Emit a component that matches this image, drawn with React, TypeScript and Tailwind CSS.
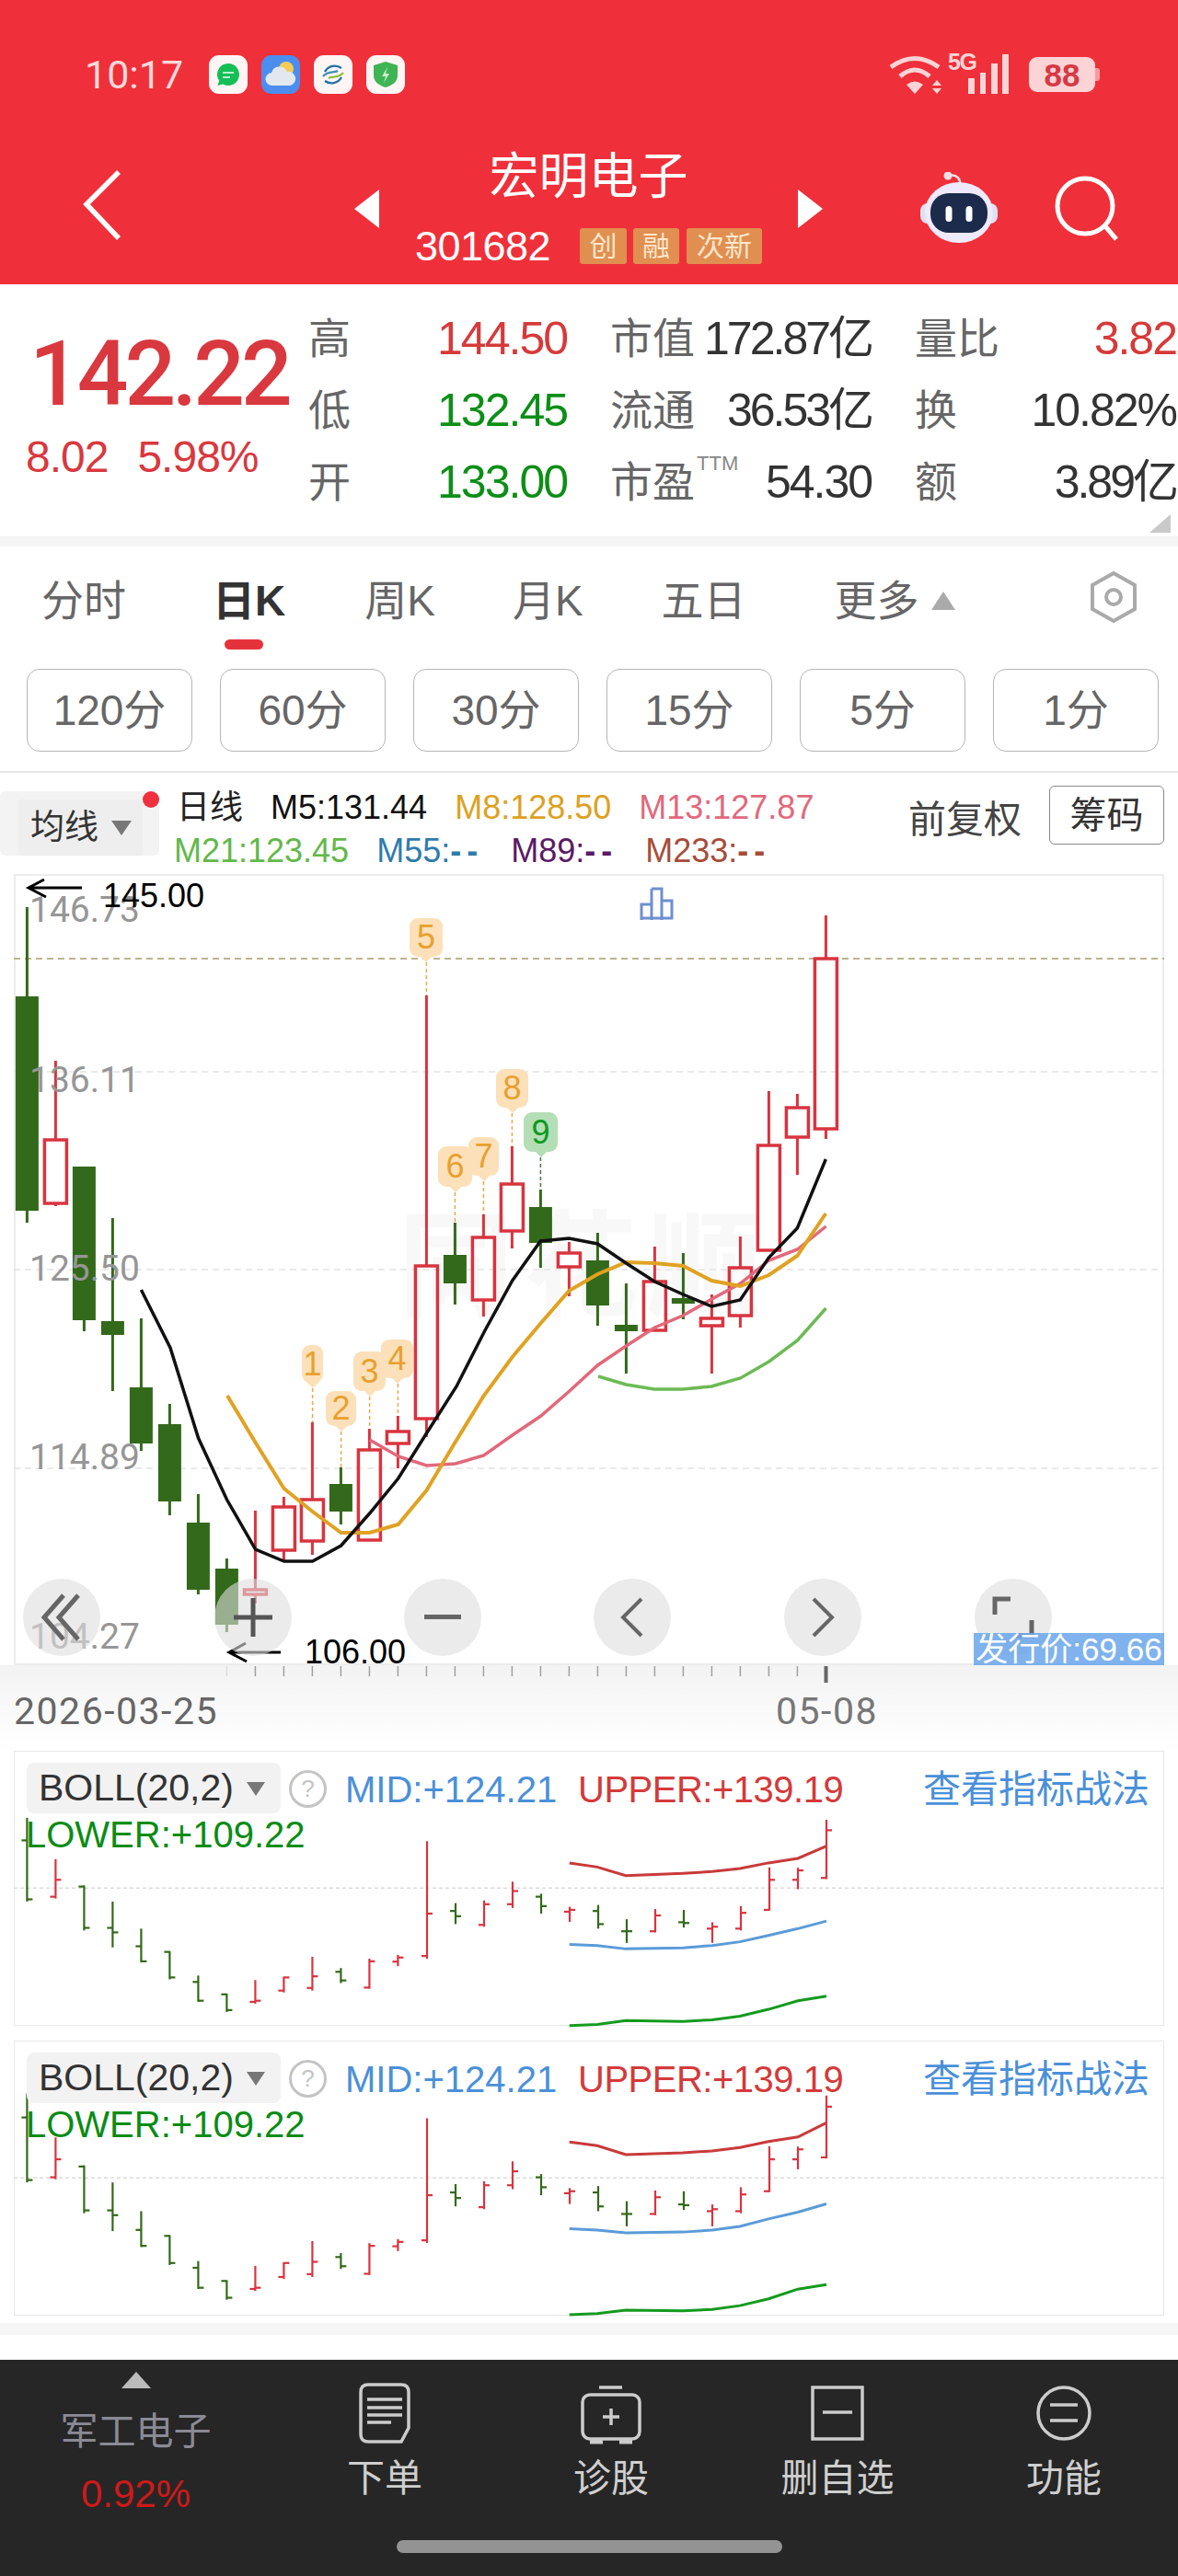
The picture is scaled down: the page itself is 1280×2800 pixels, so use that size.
import React from "react";

const RED = "#d8343f";
const GREEN = "#33691a";
const X = (i: number) => 29.4 + 31 * i;
const pts = (a: number[][]) => a.map((p) => p.join(",")).join(" ");

// [wickTop, bodyTop, bodyBottom, wickBottom, up]
const candles: [number, number, number, number, number][] = [
  [986, 1083, 1316, 1329, 0],
  [1153, 1238, 1309, 1311, 1],
  [1268, 1268, 1435, 1447, 0],
  [1324, 1436, 1451, 1512, 0],
  [1433, 1508, 1569, 1577, 0],
  [1526, 1548, 1632, 1647, 0],
  [1624, 1655, 1728, 1733, 0],
  [1694, 1705, 1766, 1774, 0],
  [1642, 1727, 1734, 1743, 1],
  [1627, 1637, 1686, 1697, 1],
  [1546, 1629, 1676, 1690, 1],
  [1595, 1613, 1643, 1657, 0],
  [1553, 1575, 1675, 1675, 1],
  [1539, 1555, 1570, 1596, 1],
  [1082, 1375, 1543, 1562, 1],
  [1329, 1364, 1395, 1418, 0],
  [1320, 1344, 1414, 1431, 1],
  [1246, 1286, 1339, 1357, 1],
  [1293, 1312, 1351, 1378, 0],
  [1350, 1361, 1378, 1409, 1],
  [1340, 1370, 1419, 1441, 0],
  [1395, 1440, 1447, 1493, 0],
  [1355, 1392, 1447, 1447, 1],
  [1362, 1411, 1417, 1434, 0],
  [1407, 1432, 1442, 1493, 1],
  [1344, 1377, 1431, 1443, 1],
  [1186, 1244, 1360, 1360, 1],
  [1189, 1203, 1237, 1277, 1],
  [995, 1041, 1228, 1238, 1],
];

const m5 = [[153.4, 1402], [185, 1465], [215.5, 1563], [246.5, 1630], [277.6, 1684], [308.6, 1697], [339.6, 1697], [370.6, 1680], [401.6, 1645], [432.7, 1607], [463.4, 1558], [496, 1507], [526.5, 1447], [556.7, 1392], [587.3, 1349], [618.3, 1346], [649.3, 1352], [680.3, 1373], [711.3, 1393], [742.3, 1407], [773.3, 1420], [804.3, 1413], [835.3, 1367], [866.3, 1335], [897.3, 1260]];
const m8 = [[247, 1517], [277.6, 1568], [308.6, 1618], [339.6, 1643], [370.6, 1666], [401.6, 1666], [432.7, 1657], [463.4, 1620], [494.4, 1568], [525.7, 1517], [556.7, 1475], [587.8, 1438], [618.3, 1403], [649.3, 1385], [680.3, 1372], [711.3, 1373], [742.3, 1376], [773.3, 1392], [804.3, 1398], [835.3, 1386], [866.3, 1365], [897.3, 1319]];
const m13 = [[401.6, 1565], [432.7, 1583], [463.6, 1593], [494.7, 1591], [525.7, 1582], [556.7, 1560], [587.8, 1539], [618.8, 1512], [649.4, 1484], [680.3, 1463], [711.3, 1443], [742, 1430], [773.5, 1412], [804.5, 1395], [835.5, 1370], [866.5, 1358], [897.5, 1333]];
const m21 = [[650, 1496], [680.4, 1505], [711, 1510], [742, 1510], [773, 1507], [804.5, 1498], [835.5, 1480], [866.5, 1457], [897.5, 1422]];

// ohlc [top, bottom, leftTick, rightTick, up] in zoom units
const ohlc: [number, number, number, number, number][] = [
  [235, 458, 295, 452, 0], [345, 450, 445, 400, 1], [415, 535, 418, 528, 0], [458, 580, 528, 540, 0],
  [530, 620, 577, 617, 0], [590, 665, 592, 660, 0], [655, 725, 672, 722, 0], [703, 752, 705, 747, 0],
  [667, 730, 725, 722, 1], [658, 700, 695, 660, 1], [605, 695, 688, 657, 1], [635, 675, 645, 668, 0],
  [610, 690, 687, 617, 1], [600, 630, 618, 607, 1], [297, 610, 603, 490, 1], [462, 518, 483, 497, 0],
  [455, 525, 520, 465, 1], [405, 475, 465, 430, 1], [437, 490, 445, 470, 0], [472, 512, 485, 480, 1],
  [467, 530, 483, 518, 0], [505, 568, 537, 537, 0], [478, 540, 537, 495, 1], [480, 527, 513, 515, 0],
  [513, 568, 530, 525, 1], [470, 535, 530, 488, 1], [367, 482, 480, 400, 1], [368, 425, 400, 375, 1],
  [240, 398, 395, 268, 1],
];
const LX = [618.7, 649, 680, 742, 773.8, 804, 835, 867, 898];
const band = (vals: number[]) => pts(vals.map((v, i) => [LX[i], 1880 + v / 2.45]));

const tags = [
  { n: "5", l: 445, t: 998, w: 36, h: 42, cx: 463.4, to: 1082 },
  { n: "1", l: 328, t: 1462, w: 23, h: 41, cx: 339.6, to: 1546 },
  { n: "2", l: 354, t: 1512, w: 33, h: 38, cx: 370.6, to: 1595 },
  { n: "4", l: 414, t: 1456, w: 35, h: 42, cx: 432.4, to: 1539 },
  { n: "3", l: 384, t: 1469, w: 35, h: 43, cx: 401.6, to: 1553 },
  { n: "7", l: 509, t: 1236, w: 33, h: 42, cx: 525.4, to: 1320 },
  { n: "6", l: 476, t: 1246, w: 37, h: 44, cx: 494.4, to: 1329 },
  { n: "8", l: 539, t: 1162, w: 35, h: 42, cx: 556.4, to: 1246 },
  { n: "9", l: 569, t: 1209, w: 37, h: 43, cx: 587.4, to: 1293, green: true },
];

const axis = [
  { v: "146.73", t: 968 },
  { v: "136.11", t: 1153 },
  { v: "125.50", t: 1358 },
  { v: "114.89", t: 1563 },
  { v: "104.27", t: 1758 },
];

function ChartDrawing() {
  return (
    <svg viewBox="15 950 1250 860" width={1250} height={860} className="block overflow-visible relative">
      {[1165, 1380, 1596].map((y) => (
        <line key={y} x1={15} x2={1265} y1={y} y2={y} stroke="#e4e4e4" strokeWidth={1.5} strokeDasharray="7 5" />
      ))}
      <line x1={15} x2={1265} y1={1042} y2={1042} stroke="#bdb48c" strokeWidth={2} strokeDasharray="7 5" />
      {tags.map((t) => (
        <line key={t.n} x1={t.cx} x2={t.cx} y1={t.t + t.h + 6} y2={t.to} stroke={t.green ? "#3f7a3f" : "#e8a94f"} strokeWidth={1.5} strokeDasharray="4 3" />
      ))}
      {candles.map(([wt, bt, bb, wb, up], i) => {
        const x = X(i);
        const c = up ? RED : GREEN;
        return (
          <g key={i}>
            {wt < bt && <line x1={x} x2={x} y1={wt} y2={bt} stroke={c} strokeWidth={3} />}
            {wb > bb && <line x1={x} x2={x} y1={bb} y2={wb} stroke={c} strokeWidth={3} />}
            {up ? (
              <rect x={x - 12} y={bt + 1} width={24} height={bb - bt - 2} fill="none" stroke={c} strokeWidth={3.5} />
            ) : (
              <rect x={x - 12.5} y={bt} width={25} height={bb - bt} fill={c} />
            )}
          </g>
        );
      })}
      <polyline points={pts(m21)} fill="none" stroke="#6cba55" strokeWidth={3.5} />
      <polyline points={pts(m13)} fill="none" stroke="#e2687b" strokeWidth={3.5} />
      <polyline points={pts(m8)} fill="none" stroke="#e0a222" strokeWidth={4} />
      <polyline points={pts(m5)} fill="none" stroke="#111111" strokeWidth={3.5} />
      <path d="M89 965H31M48 956L31 965L50 975" fill="none" stroke="#000" strokeWidth={3} />
      <path d="M305 1796H249M267 1786L249 1796L268 1806" fill="none" stroke="#000" strokeWidth={3} />
      <g fill="none" stroke="#6e8fd0" strokeWidth={3}>
        <path d="M697 1000V983H708V1000M708 966V1000M708 966H719V1000M719 979H730V998H697" />
      </g>
      {candles.slice(7, 28).map((_, i) => (
        <line key={i} x1={X(i + 7)} x2={X(i + 7)} y1={1811} y2={1822} stroke={i === 0 ? "#dddddd" : "#a0a0a0"} strokeWidth={1.5} />
      ))}
      <line x1={897.5} x2={897.5} y1={1811} y2={1829} stroke="#666" strokeWidth={4} />
    </svg>
  );
}

function Tag({ t }: { t: (typeof tags)[number] }) {
  return (
    <div
      className={`absolute flex items-center justify-center rounded-[9px] text-[36px] leading-none ${t.green ? "bg-[#b4deb6] text-[#0e9a1e]" : "bg-[#fce0b9] text-[#e8a02e]"}`}
      style={{ left: t.l - 17, top: t.t - 952, width: t.w, height: t.h }}
    >
      <div className={`absolute left-1/2 -bottom-[4px] -ml-[5px] h-[10px] w-[10px] rotate-45 ${t.green ? "bg-[#b4deb6]" : "bg-[#fce0b9]"}`} />
      <span className="relative">{t.n}</span>
    </div>
  );
}

function RoundBtn({ left, children }: { left: number; children: React.ReactNode }) {
  return (
    <div className="absolute top-[764px] flex h-[84px] w-[84px] items-center justify-center rounded-full bg-[#dddddd]/60" style={{ left }}>
      {children}
    </div>
  );
}

function Panel({ second }: { second?: boolean }) {
  const top = second ? 2218 : 1903;
  const ty = (v: number) => 1880 + (second ? 719.6 + 1.062 * v : v) / 2.45;
  const upper = second ? [1098, 1108, 1132, 1127, 1122, 1113, 1097, 1085, 1047] : [355, 366, 389, 383, 378, 370, 355, 343, 310];
  const mid = second ? [1329, 1333, 1340, 1338, 1333, 1323, 1303, 1285, 1263] : [572, 575, 584, 581, 575, 565, 548, 530, 510];
  const lower = second ? [1558, 1555, 1546, 1548, 1544, 1534, 1516, 1490, 1478] : [788, 785, 775, 777, 773, 763, 745, 722, 710];
  const dotted = 1880 + (second ? 1194 : 422) / 2.45;
  return (
    <div className="relative mx-[15px] h-[299px] w-[1250px] border border-[#e8e8e8]">
      <svg viewBox={`15 ${top} 1250 299`} width={1250} height={299} className="absolute -left-px -top-px overflow-visible">
        <line x1={15} x2={1265} y1={dotted} y2={dotted} stroke="#dcdcdc" strokeWidth={1.5} strokeDasharray="4 3" />
        {ohlc.map(([a, b, l, r, up], i) => {
          const x = X(i) + (i > 13 ? 0.6 : 0);
          const c = up ? RED : GREEN;
          return (
            <g key={i} stroke={c} strokeWidth={2.2}>
              <line x1={x} x2={x} y1={ty(a)} y2={ty(b)} />
              <line x1={x - 6} x2={x} y1={ty(l)} y2={ty(l)} />
              <line x1={x} x2={x + 6} y1={ty(r)} y2={ty(r)} />
            </g>
          );
        })}
        <polyline points={band(upper)} fill="none" stroke="#c93a3a" strokeWidth={3} />
        <polyline points={band(mid)} fill="none" stroke="#5b9bd8" strokeWidth={3} />
        <polyline points={band(lower)} fill="none" stroke="#159a1f" strokeWidth={3} />
      </svg>
      <div className="absolute left-[13px] top-[12px] flex h-[55px] w-[276px] items-center rounded-[8px] bg-[#f2f2f2] pl-[13px] text-[41px] text-[#333]">
        <span>BOLL(20,2)</span>
        <svg width={20} height={18} className="ml-[14px]"><path d="M0 2H20L10 17Z" fill="#777" /></svg>
      </div>
      <div className="absolute left-[298px] top-[20px] flex h-[41px] w-[41px] items-center justify-center rounded-full border-[3px] border-[#c4c4c4] text-[26px] text-[#c4c4c4]">?</div>
      <div className="absolute left-[359px] top-[20px] text-[40px] leading-[42px] text-[#4a90d9]">MID:+124.21</div>
      <div className="absolute left-[612px] top-[20px] text-[40px] leading-[42px] tracking-[-0.5px] text-[#d43a3a]">UPPER:+139.19</div>
      <div className="absolute right-[15px] top-[18px] text-[41px] leading-[46px] text-[#4a90d9]">查看指标战法</div>
      <div className="absolute left-[12px] top-[69px] text-[40px] leading-[42px] text-[#0a8c14]">LOWER:+109.22</div>
    </div>
  );
}

function AppIcons() {
  return (
    <div className="flex items-center gap-[15px]">
      <div className="flex h-[42px] w-[42px] items-center justify-center rounded-[11px] bg-[#fff5f5]">
        <svg width={30} height={30} viewBox="0 0 30 30">
          <path d="M15 3a12 12 0 1 1-6 22.4L3.5 27l1.6-5.2A12 12 0 0 1 15 3Z" fill="#14bf55" />
          <path d="M9 13h12M9 18h8" stroke="#bdf0cf" strokeWidth={2} />
        </svg>
      </div>
      <div className="flex h-[42px] w-[42px] items-center justify-center rounded-[11px] bg-[#4c8df0]">
        <svg width={34} height={34} viewBox="0 0 34 34">
          <circle cx={23} cy={11} r={8} fill="#f5cd55" />
          <path d="M8 29a7 7 0 0 1-1-14 9 9 0 0 1 17-1 7.500 7.500 0 0 1 3 15Z" fill="#e3e8ee" />
        </svg>
      </div>
      <div className="flex h-[42px] w-[42px] items-center justify-center rounded-[11px] bg-[#fff5f5]">
        <svg width={30} height={30} viewBox="0 0 30 30" fill="none" strokeWidth={2.4}>
          <path d="M6 12C10 5 18 4 24 8" stroke="#1f6fa8" />
          <path d="M4 17C10 10 16 14 20 11" stroke="#3d8fb8" />
          <path d="M26 13C20 20 14 16 10 19" stroke="#8fbf3f" />
          <path d="M24 18C20 25 12 26 6 22" stroke="#1f6fa8" />
        </svg>
      </div>
      <div className="flex h-[42px] w-[42px] items-center justify-center rounded-[11px] bg-[#fff5f5]">
        <svg width={30} height={32} viewBox="0 0 30 32">
          <path d="M15 2l13 4v11c0 7-6 11-13 13C8 28 2 24 2 17V6Z" fill="#3fb454" />
          <path d="M17 8l-6 10h4l-2 7 6-10h-4Z" fill="#c9efc9" />
        </svg>
      </div>
    </div>
  );
}

function StatusRight() {
  return (
    <div className="ml-auto flex items-center pr-[85px]">
      <svg width={60} height={44} viewBox="0 0 60 44" fill="none" stroke="#fcd4d6" strokeWidth={5}>
        <path d="M3 14Q29 -5 55 14" />
        <path d="M13 24Q29 10 45 24" />
        <path d="M20 33Q29 26 38 33L29 43Z" fill="#fcd4d6" stroke="none" />
        <path d="M48 34L53 28L58 34ZM48 37L58 37L53 43Z" fill="#fcd4d6" stroke="none" />
      </svg>
      <div className="relative ml-[17px] h-[44px] w-[56px]">
        <span className="absolute -left-[12px] -top-[4px] text-[25px] font-bold leading-[24px] tracking-[-1.5px] text-[#fcd4d6]">5G</span>
        <svg width={46} height={44} viewBox="0 0 46 44" className="absolute right-0 top-0" fill="#fcd4d6">
          <rect x={0} y={26} width={7} height={17} />
          <rect x={13} y={20} width={6} height={23} />
          <rect x={25} y={10} width={7} height={33} />
          <rect x={37} y={0} width={7} height={43} />
        </svg>
      </div>
      <div className="ml-[20px] flex h-[38px] w-[72px] items-center justify-center rounded-[9px] bg-[#fcd4d6] text-[35px] font-bold leading-none text-[#d63a45]">88</div>
      <div className="h-[14px] w-[5px] rounded-r-[3px] bg-[#f79aa0]" />
    </div>
  );
}

function Robot() {
  return (
    <svg width={84} height={80} viewBox="1000 182 84 80" className="ml-[106px]">
      <path d="M1031 186C1040 184 1044 190 1043 196" fill="none" stroke="#f3dfe6" strokeWidth={2.5} />
      <circle cx={1030} cy={186} r={4.500} fill="#f3dfe6" />
      <rect x={1000} y={216} width={84} height={22} rx={8} fill="#dfe0f2" />
      <ellipse cx={1042} cy={226} rx={37} ry={33} fill="#eeeafb" />
      <rect x={1011} y={205} width={62} height={43} rx={20} fill="#1c2a4c" />
      <rect x={1027.500} y={219} width={7} height={17} rx={3.500} fill="#fff" />
      <rect x={1049.500} y={219} width={7} height={17} rx={3.500} fill="#fff" />
    </svg>
  );
}

const rows = [
  [["高", "144.50", "text-[#d63a3a]"], ["市值", "172.87亿", "text-[#333]"], ["量比", "3.82", "text-[#d63a3a]"]],
  [["低", "132.45", "text-[#0d8f17]"], ["流通", "36.53亿", "text-[#333]"], ["换", "10.82%", "text-[#333]"]],
  [["开", "133.00", "text-[#0d8f17]"], ["市盈", "54.30", "text-[#333]"], ["额", "3.89亿", "text-[#333]"]],
];

export default function App() {
  return (
    <div className="relative flex h-[2800px] w-[1280px] flex-col overflow-hidden bg-white font-['Liberation_Sans','Noto_Sans_CJK_SC',sans-serif]">
      {/* header */}
      <header className="h-[309px] shrink-0 bg-[#ef303a] pt-[60px] text-white">
        <div className="flex h-[42px] items-center pl-[92px]">
          <span className="w-[135px] font-[Roboto,sans-serif] text-[43px] leading-none text-[#fdd8da]">10:17</span>
          <AppIcons />
          <StatusRight />
        </div>
        <div className="mt-[58px] flex h-[134px] items-center pl-[90px]">
          <svg width={42} height={76} viewBox="0 0 42 76" fill="none" stroke="#fff" strokeWidth={5.500} className="-mt-[8px]">
            <path d="M39 2L4 37L39 74" />
          </svg>
          <svg width={27} height={42} viewBox="0 0 27 42" className="ml-[253px]"><path d="M27 0V42L0 21Z" fill="#fff" /></svg>
          <div className="flex h-full w-[455px] flex-col items-center pt-[5px]">
            <div className="text-[54px] leading-[54px]">宏明电子</div>
            <div className="mt-[29px] flex h-[39px] items-center text-[#fff]">
              <span className="mr-[32px] text-[45px] leading-none tracking-[-0.5px]">301682</span>
              <span className="flex h-[39px] w-[51px] items-center justify-center rounded-[3px] bg-[#e08f50] text-[30px] text-[#ffe6cc]">创</span>
              <span className="ml-[7px] flex h-[39px] w-[50px] items-center justify-center rounded-[3px] bg-[#e08f50] text-[30px] text-[#ffe6cc]">融</span>
              <span className="ml-[8px] flex h-[39px] w-[82px] items-center justify-center rounded-[3px] bg-[#e08f50] text-[30px] text-[#ffe6cc]">次新</span>
            </div>
          </div>
          <svg width={27} height={42} viewBox="0 0 27 42"><path d="M0 0V42L27 21Z" fill="#fff" /></svg>
          <Robot />
          <svg width={72} height={72} viewBox="0 0 72 72" className="ml-[61px]" fill="none" stroke="#fff" strokeWidth={5}>
            <circle cx={34} cy={33} r={30} />
            <path d="M56 55L68 69" />
          </svg>
        </div>
      </header>

      {/* quote */}
      <section className="relative flex h-[274px] shrink-0">
        <div className="w-[335px] pl-[32px] pt-[50px] text-[#d9383f]">
          <div className="font-[Roboto,sans-serif] text-[98px] font-medium leading-[96px] tracking-[-4px]">142.22</div>
          <div className="-ml-[4px] mt-[19px] flex gap-[32px] text-[48px] leading-[46px] tracking-[-1px]">
            <span>8.02</span>
            <span>5.98%</span>
          </div>
        </div>
        <div className="grid grid-cols-[281px_284px_284px] auto-rows-[78px] gap-x-[47px] pt-[20px]">
          {rows.flat().map(([label, value, color], i) => (
            <div key={i} className="flex items-center justify-between text-[46px] leading-none">
              <span className="flex items-start text-[#666]">
                {label}
                {label === "市盈" && <sup className="ml-[2px] mt-[3px] text-[22px] leading-none text-[#888]">TTM</sup>}
              </span>
              <span className={`text-[50px] ${value.endsWith("亿") ? "tracking-[-3px]" : "tracking-[-2px]"} ${color}`}>{value}</span>
            </div>
          ))}
        </div>
        <svg width={23} height={20} className="absolute bottom-[4px] right-[8px]"><path d="M23 0V20H0Z" fill="#c9c9c9" /></svg>
      </section>
      <div className="h-[11px] shrink-0 bg-[#f5f5f5]" />

      {/* tabs */}
      <nav className="relative flex h-[122px] shrink-0 items-start pl-[45px] pt-[33px] text-[46px] leading-[52px] text-[#666]">
        <span>分时</span>
        <span className="ml-[94px] font-bold text-[#333]">日K</span>
        <span className="ml-[86px]">周K</span>
        <span className="ml-[84px]">月K</span>
        <span className="ml-[85px]">五日</span>
        <span className="ml-[96px]">更多</span>
        <svg width={26} height={20} className="ml-[13px] mt-[16px]"><path d="M13 0L26 20H0Z" fill="#aaaaaa" /></svg>
        <svg width={58} height={56} viewBox="0 0 58 56" className="absolute left-[1181px] top-[27px]" fill="none" stroke="#aaaaaa" strokeWidth={4}>
          <path d="M29 2L52 15V41L29 54L6 41V15Z" />
          <circle cx={29} cy={28} r={8} />
        </svg>
        <div className="absolute left-[244px] top-[101px] h-[11px] w-[42px] rounded-full bg-[#e6323c]" />
      </nav>

      {/* periods */}
      <div className="flex h-[124px] shrink-0 items-start gap-[30px] border-b-2 border-[#e6e6e6] pl-[29px] pt-[11px]">
        {["120分", "60分", "30分", "15分", "5分", "1分"].map((t) => (
          <div key={t} className="flex h-[90px] w-[180px] items-center justify-center rounded-[14px] border border-[#b5b5b5] text-[46px] text-[#666]">{t}</div>
        ))}
      </div>

      {/* legend */}
      <div className="relative flex h-[110px] shrink-0">
        <div className="mt-[20px] h-[70px] w-[173px] rounded-[6px] bg-[#f3f3f3] pl-[20px]">
          <div className="mt-[9px] flex h-[61px] w-[135px] items-center rounded-[4px] bg-[#eeeeee] pl-[13px] text-[37px] text-[#333]">
            均线
            <svg width={22} height={16} className="ml-[14px]"><path d="M0 0H22L11 16Z" fill="#777" /></svg>
          </div>
        </div>
        <div className="absolute left-[155px] top-[20px] h-[18px] w-[18px] rounded-full bg-[#f0303f]" />
        <div className="ml-[16px] flex flex-col pt-[14px] text-[36px] leading-[47px]">
          <div className="flex gap-[30px] pl-[3px]">
            <span className="text-[#222]">日线</span>
            <span className="text-[#111]">M5:131.44</span>
            <span className="text-[#dda11f]">M8:128.50</span>
            <span className="text-[#e2687b]">M13:127.87</span>
          </div>
          <div className="flex gap-[30px]">
            <span className="text-[#62b84a]">M21:123.45</span>
            <span className="text-[#2f7cab]">M55:<span className="font-bold tracking-[6px]">--</span></span>
            <span className="text-[#5b1a66]">M89:<span className="font-bold tracking-[6px]">--</span></span>
            <span className="text-[#a84c3a]">M233:<span className="font-bold tracking-[6px]">--</span></span>
          </div>
        </div>
        <div className="ml-auto flex items-start pr-[15px] pt-[14px] text-[41px] text-[#444]">
          <span className="mr-[30px] mt-[13px] leading-[48px]">前复权</span>
          <span className="flex h-[64px] w-[125px] items-center justify-center rounded-[6px] border border-[#888] text-[40px] text-[#333]">筹码</span>
        </div>
      </div>

      {/* main chart */}
      <div className="relative mx-[15px] h-[860px] w-[1250px] shrink-0 border-2 border-[#ececec]">
        <div className="absolute left-[416px] top-[363px] whitespace-nowrap text-[125px] font-bold leading-[125px] tracking-[10px] text-[#f8f8f8]">同花顺</div>
        <div className="absolute -left-[2px] -top-[2px]"><ChartDrawing /></div>
        {tags.map((t) => (
          <Tag key={t.n} t={t} />
        ))}
        {axis.map((a) => (
          <div key={a.v} className="absolute left-[15px] font-[Roboto,sans-serif] text-[39px] leading-[38px] text-[#969696]" style={{ top: a.t - 950 }}>{a.v}</div>
        ))}
        <div className="absolute left-[95px] top-[4px] text-[36px] leading-[36px] text-black">145.00</div>
        <div className="absolute left-[314px] top-[826px] text-[36px] leading-[36px] text-black">106.00</div>
        <RoundBtn left={8}>
          <svg width={46} height={54} viewBox="0 0 46 54" fill="none" stroke="#666" strokeWidth={5}><path d="M25 3L4 27L25 51M41 3L20 27L41 51" /></svg>
        </RoundBtn>
        <RoundBtn left={216}>
          <svg width={42} height={42} viewBox="0 0 42 42" fill="none" stroke="#555" strokeWidth={5}><path d="M0 21H42M21 0V42" /></svg>
        </RoundBtn>
        <RoundBtn left={422}>
          <svg width={40} height={6}><rect width={40} height={5} y={0} fill="#666" /></svg>
        </RoundBtn>
        <RoundBtn left={628}>
          <svg width={26} height={44} viewBox="0 0 26 44" fill="none" stroke="#666" strokeWidth={4}><path d="M23 2L3 22L23 42" /></svg>
        </RoundBtn>
        <RoundBtn left={835}>
          <svg width={26} height={44} viewBox="0 0 26 44" fill="none" stroke="#666" strokeWidth={4}><path d="M3 2L23 22L3 42" /></svg>
        </RoundBtn>
        <RoundBtn left={1042}>
          <svg width={46} height={46} viewBox="0 0 46 46" fill="none" stroke="#666" strokeWidth={5}><path d="M20 3H3V20M43 26V43H26" /></svg>
        </RoundBtn>
        <div className="absolute bottom-[-2px] right-[-2px] flex h-[35px] w-[207px] items-center justify-center whitespace-nowrap bg-[#6aa6ea]/85 text-[35px] leading-none text-white">发行价:69.66</div>
      </div>

      {/* dates */}
      <div className="flex h-[93px] shrink-0 items-start bg-gradient-to-b from-[#f3f3f3] to-white pl-[15px] pt-[31px] font-[Roboto,sans-serif] text-[41px] leading-[38px] tracking-[1.500px] text-[#666]">
        <span>2026-03-25</span>
        <span className="ml-[606px] text-[#777]">05-08</span>
      </div>

      <Panel />
      <div className="h-[16px] shrink-0" />
      <Panel second />
      <div className="h-[8px] shrink-0" />
      <div className="h-[13px] shrink-0 bg-[#f5f5f5]" />
      <div className="h-[27px] shrink-0" />

      {/* bottom bar */}
      <footer className="flex flex-1 flex-col bg-[#262626]">
        <div className="flex h-[196px] shrink-0">
          <div className="flex w-[295px] flex-col items-center pt-[13px]">
            <svg width={32} height={18}><path d="M16 0L32 18H0Z" fill="#bbbbbb" /></svg>
            <div className="mt-[24px] text-[41px] leading-[46px] text-[#8a8a96]">军工电子</div>
            <div className="mt-[22px] text-[42px] leading-[46px] text-[#cc1a1a]">0.92%</div>
          </div>
          {[
            {
              t: "下单",
              icon: (
                <svg width={60} height={68} viewBox="0 0 60 68" fill="none" stroke="#cccccc" strokeWidth={3.500}>
                  <path d="M12 3H48Q56 3 56 11V50L48 65H12Q4 65 4 57V11Q4 3 12 3Z" />
                  <path d="M11 19H49M11 28H49M11 36H49M11 44H37" />
                </svg>
              ),
            },
            {
              t: "诊股",
              icon: (
                <svg width={68} height={68} viewBox="0 0 68 68" fill="none" stroke="#cccccc" strokeWidth={3.500}>
                  <path d="M21 6H46" />
                  <rect x={3} y={14} width={62} height={48} rx={8} />
                  <path d="M34 29V47M25 38H43" />
                  <path d="M11 65H25M43 65H57" strokeWidth={5} />
                </svg>
              ),
            },
            {
              t: "删自选",
              icon: (
                <svg width={60} height={68} viewBox="0 0 60 68" fill="none" stroke="#cccccc" strokeWidth={3.500}>
                  <rect x={3} y={6} width={54} height={56} />
                  <path d="M14 33H46" />
                </svg>
              ),
            },
            {
              t: "功能",
              icon: (
                <svg width={62} height={68} viewBox="0 0 62 68" fill="none" stroke="#cccccc" strokeWidth={3.500}>
                  <circle cx={31} cy={34} r={28} />
                  <path d="M16 25H46M16 42H46" />
                </svg>
              ),
            },
          ].map((b) => (
            <div key={b.t} className="flex w-[246px] flex-col items-center pt-[24px]">
              {b.icon}
              <div className="mt-[14px] text-[41px] leading-[46px] text-[#cfcfcf]">{b.t}</div>
            </div>
          ))}
        </div>
        <div className="mx-auto h-[14px] w-[419px] shrink-0 rounded-full bg-[#939393]" />
      </footer>
    </div>
  );
}
